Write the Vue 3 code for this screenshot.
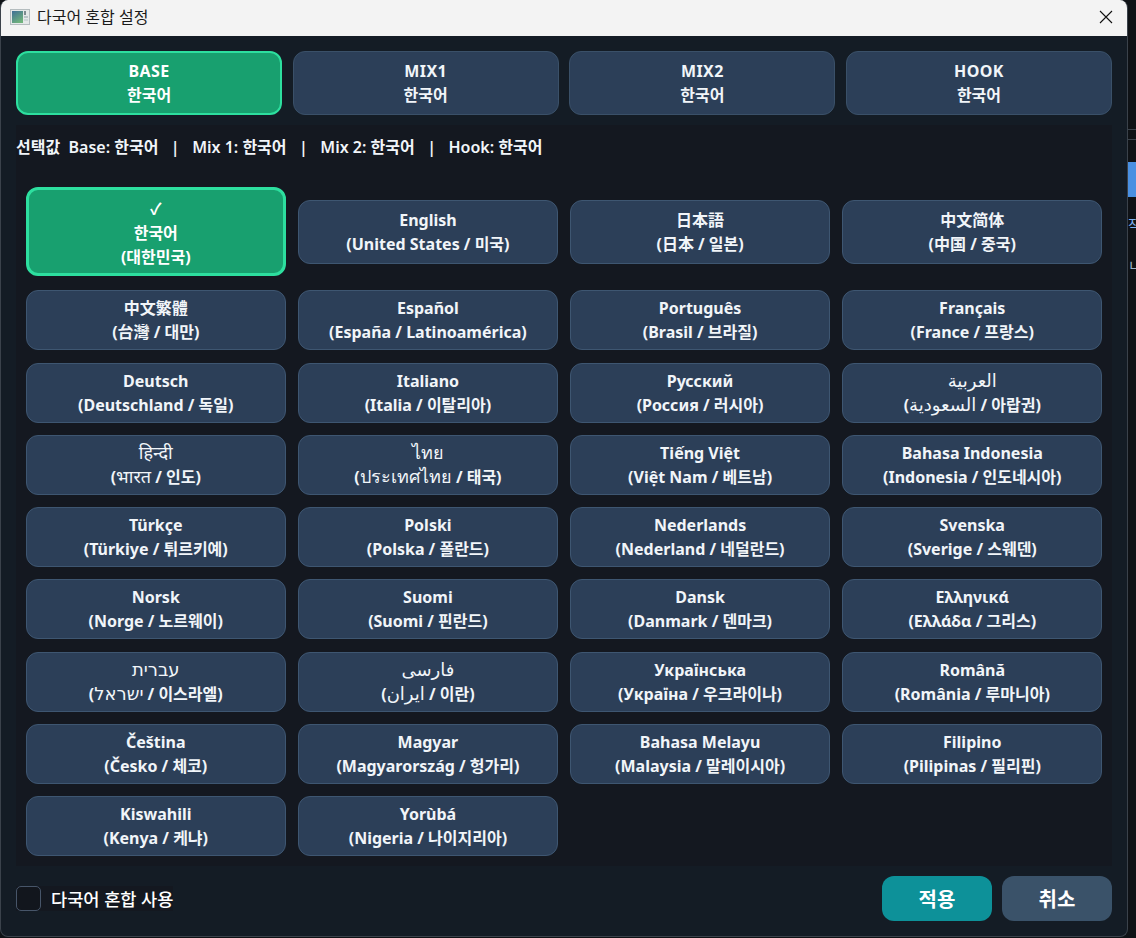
<template>
  <div class="screen">
    <div class="dialog">
      <!-- title bar -->
      <div class="titlebar">
        <svg class="app-icon" width="20" height="16" viewBox="0 0 20 16">
          <defs>
            <linearGradient id="pane" x1="0" y1="0" x2="0.6" y2="1">
              <stop offset="0" stop-color="#3f6f96" />
              <stop offset="1" stop-color="#6fb27c" />
            </linearGradient>
          </defs>
          <rect x="0.5" y="0.5" width="19" height="15" fill="#e4e8e8" stroke="#b4bcbe" />
          <rect x="2" y="2" width="11" height="12" fill="url(#pane)" />
          <rect x="14" y="2" width="2" height="4" fill="#7d8b90" />
          <rect x="14" y="7" width="4" height="2" fill="#b9c4c7" />
          <rect x="14" y="10" width="4" height="2" fill="#cdd6d8" />
        </svg>
        <span class="title">다국어 혼합 설정</span>
        <svg class="close" width="14" height="14" viewBox="0 0 14 14">
          <path d="M1 1 L13 13 M13 1 L1 13" stroke="#111" stroke-width="1.1" fill="none" />
        </svg>
      </div>

      <div class="body">
        <!-- slot tabs -->
        <div class="slots">
          <div
            v-for="slot in slots"
            :key="slot"
            class="slot"
            :class="{ active: slot === 'BASE' }"
          >
            <div class="slot-name">{{ slot }}</div>
            <div>한국어</div>
          </div>
        </div>

        <div class="summary">선택값&nbsp; Base: 한국어 &nbsp; | &nbsp; Mix 1: 한국어 &nbsp; | &nbsp; Mix 2: 한국어 &nbsp; | &nbsp; Hook: 한국어</div>

        <!-- language grid -->
        <div class="lang-grid">
          <div
            v-for="(lang, index) in languages"
            :key="lang.name"
            class="lang"
            :class="{ selected: index === 0, first: index > 0 && index < 4 }"
          >
            <div v-if="index === 0">✓</div>
            <div :class="{ plain: lang.native }">{{ lang.name }}</div>
            <div v-if="lang.native">(<span class="plain">{{ lang.native }}</span> / {{ lang.ko }})</div>
            <div v-else>{{ lang.sub }}</div>
          </div>
        </div>

        <!-- footer -->
        <div class="footer">
          <label class="use-mix">
            <span class="check"></span>
            <span>다국어 혼합 사용</span>
          </label>
          <div class="actions">
            <button class="btn apply">적용</button>
            <button class="btn cancel">취소</button>
          </div>
        </div>
      </div>
    </div>

    <!-- sliver of the window behind the dialog -->
    <div class="behind">
      <div class="behind-line"></div>
      <div class="behind-blue"></div>
      <div class="behind-text">작</div>
      <div class="behind-small">ㄴ</div>
    </div>
  </div>
</template>

<script setup>
const slots = ['BASE', 'MIX1', 'MIX2', 'HOOK']

// native 값이 있으면 해당 문자는 일반 굵기로 표시
const languages = [
  { name: '한국어', sub: '(대한민국)' },
  { name: 'English', sub: '(United States / 미국)' },
  { name: '日本語', sub: '(日本 / 일본)' },
  { name: '中文简体', sub: '(中国 / 중국)' },
  { name: '中文繁體', sub: '(台灣 / 대만)' },
  { name: 'Español', sub: '(España / Latinoamérica)' },
  { name: 'Português', sub: '(Brasil / 브라질)' },
  { name: 'Français', sub: '(France / 프랑스)' },
  { name: 'Deutsch', sub: '(Deutschland / 독일)' },
  { name: 'Italiano', sub: '(Italia / 이탈리아)' },
  { name: 'Русский', sub: '(Россия / 러시아)' },
  { name: 'العربية', native: 'السعودية', ko: '아랍권' },
  { name: 'हिन्दी', native: 'भारत', ko: '인도' },
  { name: 'ไทย', native: 'ประเทศไทย', ko: '태국' },
  { name: 'Tiếng Việt', sub: '(Việt Nam / 베트남)' },
  { name: 'Bahasa Indonesia', sub: '(Indonesia / 인도네시아)' },
  { name: 'Türkçe', sub: '(Türkiye / 튀르키예)' },
  { name: 'Polski', sub: '(Polska / 폴란드)' },
  { name: 'Nederlands', sub: '(Nederland / 네덜란드)' },
  { name: 'Svenska', sub: '(Sverige / 스웨덴)' },
  { name: 'Norsk', sub: '(Norge / 노르웨이)' },
  { name: 'Suomi', sub: '(Suomi / 핀란드)' },
  { name: 'Dansk', sub: '(Danmark / 덴마크)' },
  { name: 'Ελληνικά', sub: '(Ελλάδα / 그리스)' },
  { name: 'עברית', native: 'ישראל', ko: '이스라엘' },
  { name: 'فارسی', native: 'ایران', ko: '이란' },
  { name: 'Українська', sub: '(Україна / 우크라이나)' },
  { name: 'Română', sub: '(România / 루마니아)' },
  { name: 'Čeština', sub: '(Česko / 체코)' },
  { name: 'Magyar', sub: '(Magyarország / 헝가리)' },
  { name: 'Bahasa Melayu', sub: '(Malaysia / 말레이시아)' },
  { name: 'Filipino', sub: '(Pilipinas / 필리핀)' },
  { name: 'Kiswahili', sub: '(Kenya / 케냐)' },
  { name: 'Yorùbá', sub: '(Nigeria / 나이지리아)' }
]
</script>

<style scoped>
.screen {
  width: 1136px;
  height: 938px;
  background: #0f1216;
  overflow: hidden;
  display: flex;
  align-items: flex-start;
  font-family: "Noto Sans", "Noto Sans CJK KR", "DejaVu Sans", sans-serif;
}

.dialog {
  width: 1128px;
  height: 937px;
  flex: none;
  box-sizing: border-box;
  border: 1px solid #3b424b;
  border-top: none;
  border-radius: 8px;
  overflow: hidden;
  background: #141c25;
  display: flex;
  flex-direction: column;
}

.titlebar {
  height: 36px;
  flex: none;
  background: #f3f3f3;
  display: flex;
  align-items: center;
  padding: 0 14px 2px 9px;
  box-sizing: border-box;
  gap: 7px;
}

.title {
  font-size: 16px;
  color: #1a1a1a;
  margin-top: -2px;
}

.close {
  margin-left: auto;
}

.body {
  flex: 1;
  padding: 15px 15px 0;
  display: flex;
  flex-direction: column;
}

/* slot tabs */
.slots {
  display: grid;
  grid-template-columns: repeat(4, 1fr);
  gap: 10.6px;
  width: 1096px;
  margin-bottom: 10px;
}

.slot {
  height: 64px;
  box-sizing: border-box;
  border: 1px solid #3a5068;
  border-radius: 12px;
  background: #2c3f58;
  color: #f1f5f9;
  font-size: 16px;
  font-weight: 700;
  line-height: 24px;
  text-align: center;
  display: flex;
  flex-direction: column;
  justify-content: center;
}

.slot-name {
  letter-spacing: 0.4px;
}

.slot.active {
  background: #18a06f;
  border: 2px solid #2ddf9f;
  color: #fff;
}

.summary {
  width: 1096px;
  height: 52px;
  background: #141820;
  color: #f1f5f9;
  font-size: 16px;
  font-weight: 600;
  line-height: 44px;
  white-space: nowrap;
}

.lang-grid {
  width: 1096px;
  box-sizing: border-box;
  background: #141820;
  padding: 10px;
  display: grid;
  grid-template-columns: repeat(4, 1fr);
  grid-template-rows: 91px repeat(8, 60px);
  column-gap: 12.67px;
  row-gap: 12.3px;
  align-items: start;
}

.lang {
  height: 60px;
  box-sizing: border-box;
  border: 1px solid #3e5671;
  border-radius: 12px;
  background: #2c3f58;
  color: #f1f5f9;
  font-size: 16px;
  font-weight: 700;
  line-height: 24px;
  text-align: center;
  display: flex;
  flex-direction: column;
  justify-content: center;
}

/* 아랍어, 힌디어 등은 굵은 글꼴 없이 조금 크게 */
.plain {
  font-size: 18px;
  font-weight: 400;
}

.lang.first {
  height: 64px;
  margin-top: 13px;
}

.lang.selected {
  height: 89px;
  padding-top: 2px;
  background: #18a06f;
  border: 3px solid #2ddf9f;
  color: #fff;
}

.footer {
  width: 1096px;
  display: flex;
  align-items: center;
  justify-content: space-between;
  margin-top: 9.6px;
}

.use-mix {
  display: flex;
  align-items: center;
  gap: 10px;
  background: #141820;
  color: #fff;
  font-size: 17.6px;
  font-weight: 500;
}

.check {
  width: 25px;
  height: 25px;
  box-sizing: border-box;
  border: 1px solid #475569;
  border-radius: 5px;
  background: #12161d;
}

.actions {
  display: flex;
  gap: 10px;
}

.btn {
  width: 110px;
  height: 45px;
  border: none;
  border-radius: 12px;
  color: #fff;
  font-family: inherit;
  font-size: 20px;
  font-weight: 700;
}

.apply {
  background: #0d9199;
}

.cancel {
  background: #3a5269;
}

/* window behind the dialog, only a few pixels show */
.behind {
  width: 8px;
  flex: none;
  overflow: hidden;
  padding-top: 129px;
  color: #7fb0ee;
  font-size: 14px;
}

.behind-line {
  height: 9px;
  border-top: 1px solid #3b424b;
  border-bottom: 1px solid #3b424b;
  margin-bottom: 22px;
}

.behind-blue {
  height: 35px;
  background: #4a90e2;
  margin-bottom: 18px;
}

.behind-text {
  line-height: 20px;
  white-space: nowrap;
  margin-bottom: 20px;
}

.behind-small {
  line-height: 20px;
  color: #9fb3c8;
}
</style>

<style>
html,
body {
  margin: 0;
  background: #0f1216;
}
</style>
